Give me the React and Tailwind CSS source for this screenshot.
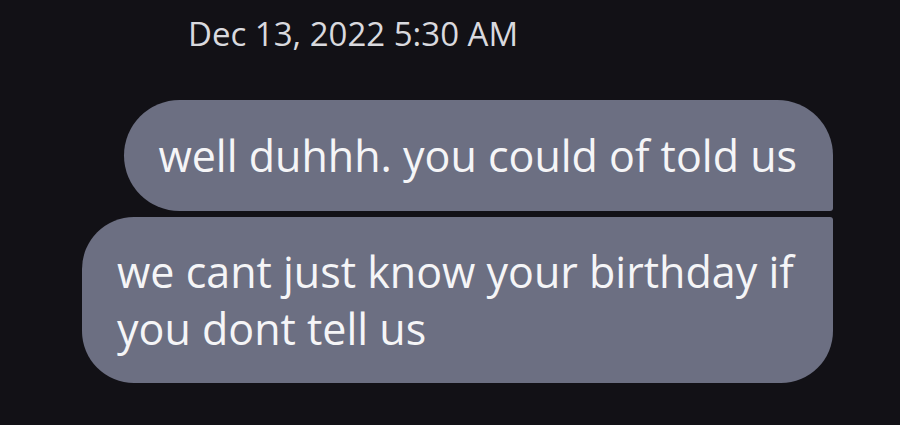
import React from "react";

const font = { fontFamily: '"Open Sans", "Noto Sans", sans-serif' };

const App = () => {
	return (
		<div className="w-[900px] h-[425px] overflow-hidden bg-[#121116] flex flex-col" style={font}>
			{/* timestamp */}
			<div className="pl-[188px] pt-[14px] h-[100px] text-[33px] leading-[40px] text-[#d9d9de]">
				Dec 13, 2022 5:30 AM
			</div>

			{/* bubbles */}
			<div className="flex flex-col items-end gap-[6px] pr-[67px]">
				<div className="bg-[#6c6f82] text-[#f5f5f7] text-[43px] leading-[57px] pl-[34px] pr-[36px] py-[27px] rounded-l-[56px] rounded-tr-[56px] rounded-br-[3px] whitespace-nowrap">
					well duhhh. you could of told us
				</div>
				<div className="w-[751px] bg-[#6c6f82] text-[#f5f5f7] text-[43px] leading-[57px] pl-[35px] pr-[20px] py-[26px] rounded-l-[52px] rounded-br-[52px] rounded-tr-[3px]">
					we cant just know your birthday if you dont tell us
				</div>
			</div>
		</div>
	);
};

export default App;
